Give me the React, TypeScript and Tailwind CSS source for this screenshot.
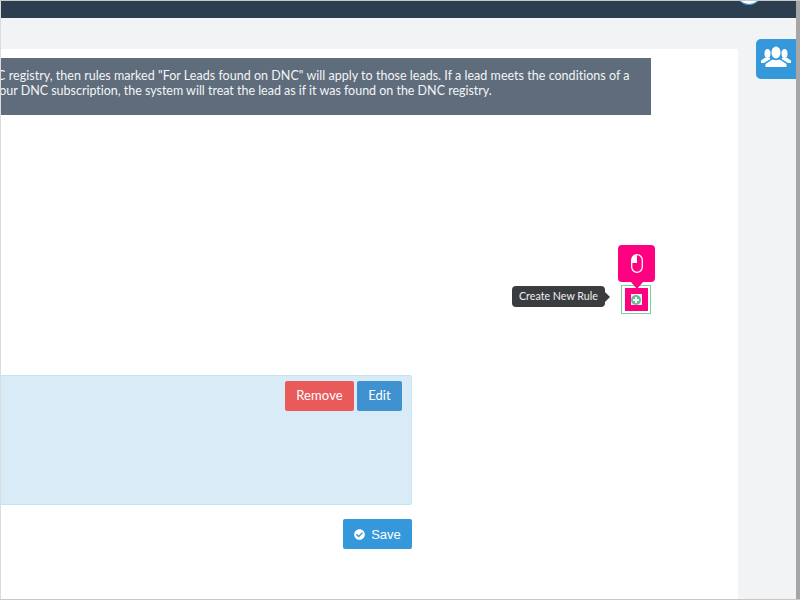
import React from "react";
import { FaCheckCircle } from "react-icons/fa";

const App: React.FC = () => {
  return (
    <div className="relative flex h-[600px] w-[800px] flex-col overflow-hidden border-t border-b border-[#c8c8c8] bg-[#f1f3f5] font-['Lato',sans-serif]">
      {/* Top bar */}
      <div className="relative h-[17px] shrink-0 overflow-hidden bg-[#2c3e50]">
        <div className="absolute right-[39px] top-[-20px] h-6 w-6 rounded-full border-b border-[#3498db] bg-white" />
      </div>

      <div className="flex min-h-0 flex-1">
        {/* Main panel */}
        <div className="mt-[31px] flex w-[738px] shrink-0 flex-col bg-white pr-[87px] pt-[9px]">
          {/* DNC notice */}
          <div className="h-[57px] overflow-hidden bg-[#5e6c7c] pt-[10px] text-[12.5px] font-normal leading-[15px] text-[#f4f5f6]">
            <p className="ml-[-22px] whitespace-nowrap tracking-[0.025px]">
              DNC registry, then rules marked "For Leads found on DNC" will apply to those leads. If a lead meets the conditions of a
            </p>
            <p className="ml-[-7px] whitespace-nowrap tracking-[-0.02px]">
              your DNC subscription, the system will treat the lead as if it was found on the DNC registry.
            </p>
          </div>

          {/* Create rule */}
          <div className="mt-[170px] flex justify-end">
            <button className="relative flex h-[29px] w-[30px] items-center justify-center border border-[#78d29c] bg-white">
              <span className="flex h-[23px] w-[23px] items-center justify-center bg-[#ff0080]">
                <span className="flex h-[11px] w-[11px] items-center justify-center bg-[#eef6f1]">
                  <svg width="10" height="10" viewBox="0 0 10 10">
                    <circle cx="5" cy="5" r="5" fill="#62bd8e" />
                    <path d="M5 2 V8 M2 5 H8" stroke="white" strokeWidth="2" />
                  </svg>
                </span>
              </span>

              {/* Click hint */}
              <span className="absolute left-[-4px] top-[-41px] flex h-[37px] w-[37px] items-center justify-center rounded-[4px] bg-[#ff0080]">
                <svg width="12" height="19" viewBox="0 0 12 19" fill="none">
                  <rect x="0.7" y="0.7" width="10.6" height="17.6" rx="5.3" stroke="white" strokeWidth="1.3" />
                  <path d="M6 0.7 A5.3 5.3 0 0 0 0.7 6 V9 H6 Z" fill="white" />
                </svg>
                <span className="absolute bottom-[-7px] left-[13px] h-0 w-0 border-x-[6px] border-t-[7px] border-x-transparent border-t-[#ff0080]" />
              </span>

              {/* Tooltip */}
              <span className="absolute left-[-110px] top-[0px] flex h-[21px] w-[93px] items-center justify-center whitespace-nowrap rounded-[4px] bg-[#3a3d40] text-[10.7px] text-[#f0f0f0]">
                Create New Rule
                <span className="absolute right-[-5px] top-[6px] h-0 w-0 border-y-[5px] border-l-[5px] border-y-transparent border-l-[#3a3d40]" />
              </span>
            </button>
          </div>

          {/* Rule card */}
          <div className="mt-[61px] flex h-[130px] w-[412px] justify-end gap-[3px] rounded-r-[2px] border border-l-0 border-[#c5e3f0] bg-[#d9ebf7] pr-[9px] pt-[5px]">
            <button className="h-[30px] w-[69px] rounded-[2px] bg-[#e95b5b] text-[13px] tracking-[0.1px] text-white">
              Remove
            </button>
            <button className="h-[30px] w-[45px] rounded-[2px] bg-[#4091d0] text-[13px] tracking-[0.1px] text-white">
              Edit
            </button>
          </div>

          {/* Save */}
          <div className="mt-[14px] flex w-[412px] justify-end">
            <button className="flex h-[30px] w-[69px] items-center justify-center gap-[6px] rounded-[2px] bg-[#3498db] pt-px font-['Liberation_Sans',sans-serif] text-[13px] text-white">
              <FaCheckCircle className="text-[11px]" />
              Save
            </button>
          </div>
        </div>

        {/* Side tab */}
        <div className="ml-[18px] mt-[21px] h-10 w-10 self-start rounded-l-[5px] bg-[#3498db]">
          <svg width="40" height="40" viewBox="0 0 40 40" fill="white">
            <ellipse cx="20" cy="13.5" rx="4.5" ry="6" />
            <path d="M9.5 28 V25 L16.5 20.5 Q20 22 23.5 20.5 L30.5 25 V28 Z" />
            <ellipse cx="11.5" cy="14.5" rx="3" ry="4.5" />
            <ellipse cx="28.5" cy="14.5" rx="3" ry="4.5" />
            <path d="M5 24 V21.5 L9.5 18.5 Q11.5 19.5 13.5 18.5 L14.5 20 L8 24 Z" />
            <path d="M35 24 V21.5 L30.5 18.5 Q28.5 19.5 26.5 18.5 L25.5 20 L32 24 Z" />
          </svg>
        </div>
      </div>

      {/* Window edges */}
      <div className="absolute bottom-0 left-0 top-0 w-px bg-[#dcdcdc]" />
      <div className="absolute bottom-0 right-0 top-0 w-1 bg-[#a6a6a6]" />
    </div>
  );
};

export default App;
